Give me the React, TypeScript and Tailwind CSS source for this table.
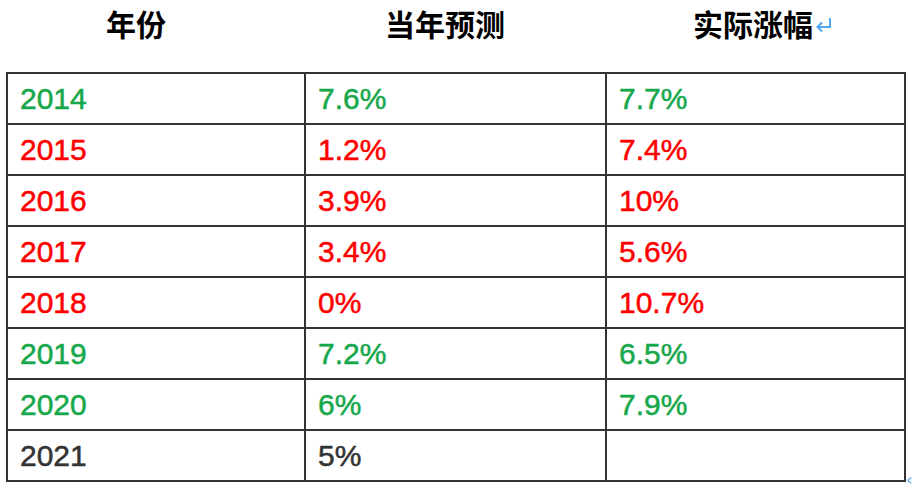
import React from "react";

type Row = { year: string; forecast: string; actual: string; tone: "up" | "down" | "none" };

const ROWS: Row[] = [
  { year: "2014", forecast: "7.6%", actual: "7.7%", tone: "up" },
  { year: "2015", forecast: "1.2%", actual: "7.4%", tone: "down" },
  { year: "2016", forecast: "3.9%", actual: "10%", tone: "down" },
  { year: "2017", forecast: "3.4%", actual: "5.6%", tone: "down" },
  { year: "2018", forecast: "0%", actual: "10.7%", tone: "down" },
  { year: "2019", forecast: "7.2%", actual: "6.5%", tone: "up" },
  { year: "2020", forecast: "6%", actual: "7.9%", tone: "up" },
  { year: "2021", forecast: "5%", actual: "", tone: "none" },
];

const toneClass = {
  up: "text-[#17a84b]",
  down: "text-[#fe0000]",
  none: "text-[#333333]",
};

// paragraph mark shown after the last header cell
function ReturnMark() {
  return (
    <svg width="17" height="16" viewBox="0 0 17 16" className="ml-[2px] mt-[4px]">
      <path d="M15 1 V10 H3" fill="none" stroke="#4ea6f5" strokeWidth="2" />
      <path d="M7 5.5 L2.5 10 L7 14.5" fill="none" stroke="#4ea6f5" strokeWidth="2" />
    </svg>
  );
}

export default function App() {
  return (
    <div className="w-[918px] h-[490px] bg-white relative overflow-hidden font-['Liberation_Sans',Arial,sans-serif]">
      {/* header line, sits above the table */}
      <div className="flex h-[45px] items-center text-[30px] font-bold text-black font-['Noto_Sans_CJK_SC',sans-serif] leading-none">
        <div className="w-[305px] pl-[106px]">年份</div>
        <div className="w-[301px] pl-[80px]">当年预测</div>
        <div className="flex items-center pl-[87px]">
          <span>实际涨幅</span>
          <ReturnMark />
        </div>
      </div>

      <table className="ml-[6px] mt-[27px] w-[898px] border-collapse table-fixed border-2 border-[#333333]">
        <colgroup>
          <col className="w-[298px]" />
          <col className="w-[301px]" />
          <col className="w-[299px]" />
        </colgroup>
        <tbody>
          {ROWS.map((row) => (
            <tr key={row.year} className="h-[51px]">
              {[row.year, row.forecast, row.actual].map((cell, i) => (
                <td
                  key={i}
                  className={`border-2 border-[#333333] pl-[12px] p-0 align-middle text-[30px] leading-none [-webkit-text-stroke:0.5px] ${toneClass[row.tone]}`}
                >
                  {cell}
                </td>
              ))}
            </tr>
          ))}
        </tbody>
      </table>

      <span className="absolute left-[906px] top-[472px] text-[16px] leading-none text-[#4ea6f5] font-['DejaVu_Sans',sans-serif]">‹</span>
    </div>
  );
}
